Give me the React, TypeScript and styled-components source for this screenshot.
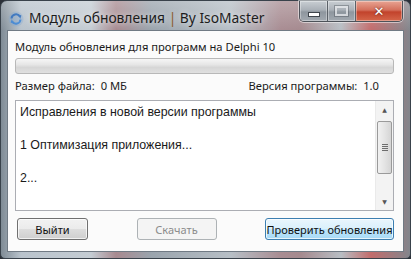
import styled, { createGlobalStyle } from 'styled-components';

const GlobalStyle = createGlobalStyle`
  html, body {
    margin: 0;
    padding: 0;
    background: #2b3038;
  }
  body {
    font-family: "Noto Sans", "DejaVu Sans", sans-serif;
  }
`;

const notes = ['Исправления в новой версии программы', '', '1 Оптимизация приложения...', '', '2...'];

const RefreshIcon = () => (
  <svg width="16" height="16" viewBox="0 0 16 16">
    <circle cx="8" cy="8" r="7.5" fill="#7fa6d4" opacity="0.35" />
    <path d="M3.5 7.5 A4.5 4.5 0 0 1 11.8 5.5" stroke="#2f6fc0" strokeWidth="2" fill="none" />
    <path d="M10 3.2 L13.4 4.6 L12.2 8 Z" fill="#2f6fc0" />
    <path d="M12.5 8.5 A4.5 4.5 0 0 1 4.2 10.5" stroke="#3d86d8" strokeWidth="2" fill="none" />
    <path d="M6 12.8 L2.6 11.4 L3.8 8 Z" fill="#3d86d8" />
  </svg>
);

const App = () => {
  return (
    <>
      <GlobalStyle />
      <Window>
        <TitleBar>
          <TitleIcon>
            <RefreshIcon />
          </TitleIcon>
          <TitleText>
            Модуль обновления <Pipe>|</Pipe> By IsoMaster
          </TitleText>
          <CaptionButtons>
            <CaptionButton $kind="min">
              <MinGlyph />
            </CaptionButton>
            <CaptionButton $kind="max">
              <MaxGlyph />
            </CaptionButton>
            <CaptionButton $kind="close">
              <CloseGlyph>✕</CloseGlyph>
            </CaptionButton>
          </CaptionButtons>
        </TitleBar>

        <Client>
          <Caption>Модуль обновления для программ на Delphi 10</Caption>
          <Progress />
          <InfoRow>
            <span>Размер файла:&nbsp; 0 МБ</span>
            <span>Версия программы:&nbsp; 1.0</span>
          </InfoRow>

          <Memo>
            <MemoText>
              {notes.map((line, i) => (
                <MemoLine key={i}>{line || '\u00a0'}</MemoLine>
              ))}
            </MemoText>
            <ScrollBar>
              <Arrow>▲</Arrow>
              <Track>
                <Thumb>
                  <Grip />
                  <Grip />
                  <Grip />
                  <Grip />
                </Thumb>
              </Track>
              <Arrow>▼</Arrow>
            </ScrollBar>
          </Memo>

          <ButtonRow>
            <Button $width={71}>Выйти</Button>
            <Button $width={80} $disabled>
              Скачать
            </Button>
            <Button $width={129} $focused>
              Проверить обновления
            </Button>
          </ButtonRow>
        </Client>
      </Window>
    </>
  );
};

export default App;

const Window = styled.div`
  width: 411px;
  height: 259px;
  box-sizing: border-box;
  display: flex;
  flex-direction: column;
  padding: 0 6px 6px 6px;
  border: 1px solid #39424b;
  border-radius: 7px 7px 5px 5px;
  background:
    linear-gradient(to bottom, rgba(255, 255, 255, 0.25), rgba(255, 255, 255, 0) 30px),
    linear-gradient(
      to right,
      #7f8b95 0px,
      #b9c3cc 20px,
      #c4ccd3 90px,
      #a88a90 115px,
      #9aa4ad 150px,
      #b7bfc6 230px,
      #a88c92 280px,
      #a58a8f 300px,
      #b8bec4 340px,
      #c26c6c 370px,
      #7f878e 411px
    );
`;

const TitleBar = styled.div`
  height: 29px;
  display: flex;
  align-items: flex-start;
`;

const TitleIcon = styled.div`
  width: 16px;
  height: 16px;
  margin: 9px 5px 0 1px;
  opacity: 0.85;
`;

const TitleText = styled.div`
  margin-top: 7px;
  font-size: 13.8px;
  color: #1c1c1c;
  white-space: nowrap;
  text-shadow: 0 0 6px rgba(255, 255, 255, 0.8);
`;

const Pipe = styled.span`
  color: #8a5a2a;
`;

const CaptionButtons = styled.div`
  margin-left: auto;
  margin-right: 1px;
  display: flex;
  height: 20px;
  border: 1px solid #4d5259;
  border-top: none;
  border-radius: 0 0 5px 5px;
  overflow: hidden;
  box-shadow: 0 0 0 1px rgba(255, 255, 255, 0.5);
`;

const CaptionButton = styled.div<{ $kind: 'min' | 'max' | 'close' }>`
  width: ${(p) => (p.$kind === 'close' ? 46 : 27)}px;
  display: flex;
  align-items: center;
  justify-content: center;
  border-left: ${(p) => (p.$kind === 'min' ? 'none' : '1px solid #5b6168')};
  background: ${(p) =>
    p.$kind === 'close'
      ? 'linear-gradient(to bottom, #e8a493 0%, #d4705c 45%, #c2432c 55%, #d5664a 100%)'
      : 'linear-gradient(to bottom, #c9ced3 0%, #a9b0b7 45%, #8e969e 55%, #a2a9b0 100%)'};
  box-shadow: inset 0 0 0 1px rgba(255, 255, 255, 0.35);
`;

const MinGlyph = styled.div`
  width: 10px;
  height: 3px;
  background: #fff;
  border: 1px solid #3f454c;
  margin-top: 6px;
`;

const MaxGlyph = styled.div`
  width: 9px;
  height: 6px;
  border: 2px solid #eef0f2;
  outline: 1px solid rgba(60, 66, 74, 0.5);
  opacity: 0.7;
`;

const CloseGlyph = styled.span`
  font-family: "DejaVu Sans", sans-serif;
  font-size: 13px;
  font-weight: bold;
  color: #fff;
  text-shadow: 0 0 2px #4a1a10;
  line-height: 1;
`;

const Client = styled.div`
  flex: 1;
  display: flex;
  flex-direction: column;
  background: #fbfbfb;
  border: 1px solid #707a84;
  padding: 8px 9px 0 7px;
  font-size: 11.2px;
  color: #1a1a1a;
`;

const Caption = styled.div`
  height: 15px;
  line-height: 15px;
`;

const Progress = styled.div`
  margin-top: 4px;
  height: 14px;
  border: 1px solid #b8b8b8;
  border-radius: 3px;
  background: linear-gradient(to bottom, #f6f6f6 0%, #e6e6e6 40%, #d6d6d6 60%, #e0e0e0 100%);
`;

const InfoRow = styled.div`
  margin-top: 4px;
  height: 15px;
  line-height: 15px;
  display: flex;
  justify-content: space-between;
  padding-right: 15px;
`;

const Memo = styled.div`
  margin-top: 7px;
  height: 109px;
  display: flex;
  border: 1px solid #abadb3;
  background: #fff;
`;

const MemoText = styled.div`
  flex: 1;
  padding: 3px 4px;
  font-family: "Liberation Sans", Arial, sans-serif;
  font-size: 12.4px;
`;

const MemoLine = styled.div`
  height: 16.4px;
  line-height: 16px;
`;

const ScrollBar = styled.div`
  width: 17px;
  display: flex;
  flex-direction: column;
  background: #f3f3f3;
  border-left: 1px solid #eaeaea;
`;

const Arrow = styled.div`
  height: 17px;
  display: flex;
  align-items: center;
  justify-content: center;
  font-size: 6px;
  color: #555;
  font-family: "DejaVu Sans", sans-serif;
`;

const Track = styled.div`
  flex: 1;
  padding: 3px 1px 0 1px;
`;

const Thumb = styled.div`
  height: 51px;
  border: 1px solid #9a9a9a;
  border-radius: 2px;
  background: linear-gradient(to right, #f1f1f1 0%, #e4e4e4 50%, #d5d5d5 100%);
  display: flex;
  flex-direction: column;
  align-items: center;
  justify-content: center;
  gap: 1px;
`;

const Grip = styled.div`
  width: 6px;
  height: 1px;
  background: #6d6d6d;
`;

const ButtonRow = styled.div`
  margin-top: 7px;
  display: flex;
  justify-content: space-between;
  padding: 0 0 0 2px;
`;

const Button = styled.div<{ $width: number; $disabled?: boolean; $focused?: boolean }>`
  width: ${(p) => p.$width}px;
  height: 22px;
  box-sizing: border-box;
  display: flex;
  align-items: center;
  justify-content: center;
  border-radius: 3px;
  font-size: 11px;
  white-space: nowrap;
  color: ${(p) => (p.$disabled ? '#8b8b8b' : '#111')};
  border: 1px solid ${(p) => (p.$disabled ? '#adb2b5' : p.$focused ? '#3c7fb1' : '#707070')};
  background: ${(p) =>
    p.$disabled
      ? '#f4f4f4'
      : p.$focused
      ? 'linear-gradient(to bottom, #eaf6fd 0%, #d9f0fc 50%, #bee6fd 51%, #a7d9f5 100%)'
      : 'linear-gradient(to bottom, #f2f2f2 0%, #ebebeb 50%, #dddddd 51%, #cfcfcf 100%)'};
  box-shadow: ${(p) => (p.$disabled ? 'none' : 'inset 0 0 0 1px rgba(255, 255, 255, 0.7)')};
`;
